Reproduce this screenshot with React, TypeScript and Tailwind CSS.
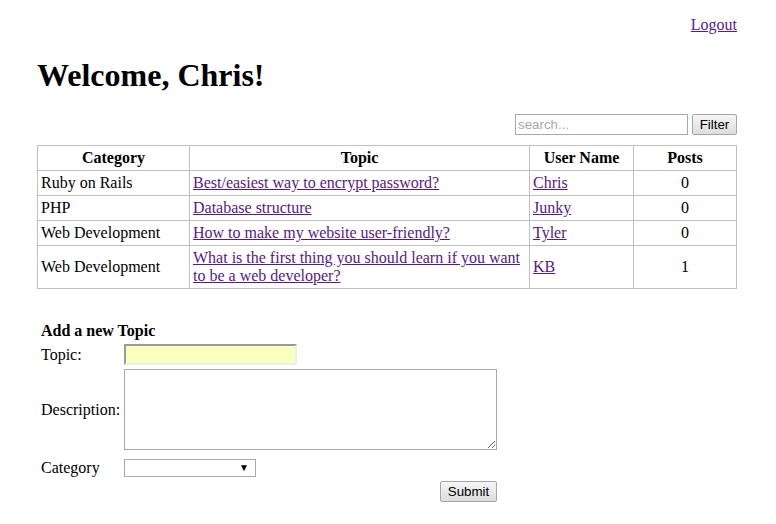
const topics = [
  { category: "Ruby on Rails", topic: "Best/easiest way to encrypt password?", user: "Chris", posts: 0 },
  { category: "PHP", topic: "Database structure", user: "Junky", posts: 0 },
  { category: "Web Development", topic: "How to make my website user-friendly?", user: "Tyler", posts: 0 },
  { category: "Web Development", topic: "What is the first thing you should learn if you want to be a web developer?", user: "KB", posts: 1 },
];

const cell = "border border-[#bfbfbf] px-[3px] py-[3px] leading-[18px]";
const link = "text-[#551a8b] underline";
const btn =
  "h-[21px] rounded-[2px] border border-[#a6a6a6] bg-gradient-to-b from-[#f6f6f6] to-[#dddddd] px-[6px] text-[13.33px] leading-[19px] text-black font-['Liberation_Sans',Arial,sans-serif]";

export default function App() {
  return (
    <div className="min-h-[524px] bg-white font-['Liberation_Serif','Times_New_Roman',serif] text-[16px] text-black">
      <div className="ml-[37px] w-[700px]">
        <div className="flex justify-end pt-[16px] leading-[18px]">
          <a href="#" className={link}>Logout</a>
        </div>

        <h1 className="mt-[23px] text-[32px] font-bold leading-[37px]">Welcome, Chris!</h1>

        <div className="mt-[20px] flex justify-end gap-[4px]">
          <input
            placeholder="search..."
            className="h-[21px] w-[173px] border border-[#a9a9a9] px-[2px] text-[13.33px] font-['Liberation_Sans',Arial,sans-serif] placeholder:text-[#a9a9a9] outline-none"
          />
          <button className={`${btn} w-[45px]`}>Filter</button>
        </div>

        <table className="mt-[10px] w-[699px] table-fixed border-collapse">
          <colgroup>
            <col className="w-[152px]" />
            <col className="w-[340px]" />
            <col className="w-[104px]" />
            <col className="w-[103px]" />
          </colgroup>
          <thead>
            <tr>
              <th className={`${cell} text-center font-bold`}>Category</th>
              <th className={`${cell} text-center font-bold`}>Topic</th>
              <th className={`${cell} text-center font-bold`}>User Name</th>
              <th className={`${cell} text-center font-bold`}>Posts</th>
            </tr>
          </thead>
          <tbody>
            {topics.map((t, i) => (
              <tr key={i}>
                <td className={`${cell} text-left align-middle`}>{t.category}</td>
                <td className={`${cell} text-left align-middle`}>
                  <a href="#" className={link}>{t.topic}</a>
                </td>
                <td className={`${cell} text-left align-middle`}>
                  <a href="#" className={link}>{t.user}</a>
                </td>
                <td className={`${cell} text-center align-middle`}>{t.posts}</td>
              </tr>
            ))}
          </tbody>
        </table>

        <div className="ml-[4px] mt-[33px] w-[456px] leading-[18px]">
          <div className="font-bold">Add a new Topic</div>

          <div className="mt-[4px] grid grid-cols-[83px_1fr] items-center gap-y-[4px]">
            <span>Topic:</span>
            <input className="h-[21px] w-[173px] border-2 border-t-[#9a9a9a] border-l-[#9a9a9a] border-b-[#eeeeee] border-r-[#eeeeee] bg-[#faffbd] outline-none" />

            <span>Description:</span>
            <textarea className="h-[81px] w-[373px] border border-[#a9a9a9] outline-none" />

            <span className="mt-[4px]">Category</span>
            <div className="relative mt-[5px] h-[18px] w-[132px]">
              <select className="h-[18px] w-[132px] appearance-none border border-[#a9a9a9] bg-white outline-none" />
              <span className="pointer-events-none absolute right-[7px] top-[2px] text-[10px] leading-[14px]">▼</span>
            </div>
          </div>

          <div className="mt-[4px] flex w-[456px] justify-end">
            <button className={`${btn} w-[57px]`}>Submit</button>
          </div>
        </div>
      </div>
    </div>
  );
}
